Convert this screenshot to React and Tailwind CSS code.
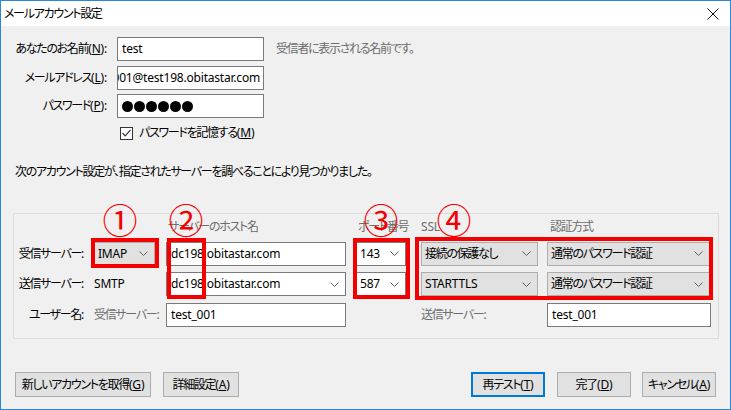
import React from 'react';

// Windows-style account setup dialog with red annotation boxes

const isLatin = (s) => /^[\x20-\x7e]+$/.test(s);

const Chevron = () => (
  <svg width="9" height="5" viewBox="0 0 9 5" className="shrink-0">
    <polyline points="0.5,0.5 4.5,4.5 8.5,0.5" fill="none" stroke="#606060" strokeWidth="1" />
  </svg>
);

// access key suffix like "(N):"
const Key = ({ k, colon }) => (
  <span className="tracking-[-0.2px]">
    (<span className="underline">{k}</span>){colon ? ':' : ''}
  </span>
);

function Label({ value }) {
  return <span className={`whitespace-nowrap ${isLatin(value) ? 'tracking-[-0.2px]' : ''}`}>{value}</span>;
}

function Combo({ value, gray, className }) {
  return (
    <div
      className={`flex h-[24px] items-center justify-between border pl-[3px] pr-[6px] ${
        gray ? 'border-[#adadad] bg-[#e1e1e1]' : 'border-[#7a7a7a] bg-white'
      } ${className}`}
    >
      <Label value={value} />
      <Chevron />
    </div>
  );
}

function TextBox({ value, className }) {
  return (
    <div className={`flex h-[24px] items-center border border-[#7a7a7a] bg-white pl-[4px] ${className}`}>
      <Label value={value} />
    </div>
  );
}

function Button({ children, primary, className }) {
  return (
    <div
      className={`flex h-[25px] items-center justify-center whitespace-nowrap bg-[#e1e1e1] ${
        primary ? 'border-2 border-[#0078d7]' : 'border border-[#adadad]'
      } ${className}`}
    >
      {children}
    </div>
  );
}

const Mark = ({ children, className }) => (
  <span
    className={`absolute flex h-[36px] w-[36px] items-center justify-center text-[35px] leading-none tracking-normal text-[#f40000] ${className}`}
  >
    {children}
  </span>
);

export default function App() {
  return (
    <div className="flex h-[410px] w-[731px] flex-col border border-[#2b88d8] bg-[#f0f0f0] font-['Noto_Sans','Noto_Sans_CJK_JP',sans-serif] text-[12px] tracking-[-1.3px] text-black [font-feature-settings:'palt']">
      {/* title bar */}
      <div className="flex h-[25px] shrink-0 items-center justify-between bg-white pl-[3px] pr-[11px]">
        <span>メールアカウント設定</span>
        <svg width="12" height="12" viewBox="0 0 12 12">
          <path d="M0.5 0.5 L11.5 11.5 M11.5 0.5 L0.5 11.5" stroke="#111" strokeWidth="1" />
        </svg>
      </div>

      {/* identity fields */}
      <div className="mt-[11px] flex flex-col gap-[4.5px]">
        <div className="flex items-center">
          <div className="w-[106px] whitespace-nowrap text-right">
            あなたのお名前<Key k="N" colon />
          </div>
          <TextBox value="test" className="ml-[10px] w-[147px]" />
          <span className="ml-[12px] text-[#6d6d6d]">受信者に表示される名前です。</span>
        </div>
        <div className="flex items-center">
          <div className="w-[106px] whitespace-nowrap text-right">
            メールアドレス<Key k="L" colon />
          </div>
          <div className="ml-[10px] flex h-[24px] w-[147px] items-center justify-end overflow-hidden border border-[#7a7a7a] bg-white pr-[3px]">
            <span className="whitespace-nowrap tracking-[-0.2px]">test_001@test198.obitastar.com</span>
          </div>
        </div>
        <div className="flex items-center">
          <div className="w-[106px] whitespace-nowrap text-right">
            パスワード<Key k="P" colon />
          </div>
          <div className="ml-[10px] flex h-[24px] w-[147px] items-center gap-[1px] border border-[#7a7a7a] bg-white pl-[4px]">
            {[0, 1, 2, 3, 4, 5].map((i) => (
              <span key={i} className="h-[11px] w-[11px] rounded-full bg-black" />
            ))}
          </div>
        </div>
      </div>

      <div className="ml-[119px] mt-[7px] flex h-[16px] items-center gap-[6px]">
        <div className="flex h-[13px] w-[13px] items-center justify-center border border-[#333] bg-white">
          <svg width="9" height="8" viewBox="0 0 9 8">
            <polyline points="0.5,4 3.2,6.8 8.5,0.8" fill="none" stroke="#333" strokeWidth="1.2" />
          </svg>
        </div>
        <span className="whitespace-nowrap">
          パスワードを記憶する<Key k="M" />
        </span>
      </div>

      <div className="ml-[14px] mt-[23px] h-[16px] whitespace-nowrap leading-[16px]">
        次のアカウント設定が、指定されたサーバーを調べることにより見つかりました。
      </div>

      {/* server settings group */}
      <div className="relative ml-[12px] mt-[33px] w-[706px] border border-[#dcdcdc] pb-[11px]">
        <div className="grid grid-cols-[80px_72px_190px_65px_126px_164px] grid-rows-[16px_24px_24px_24px] items-center gap-y-[6.5px] whitespace-nowrap pt-[5px]">
          <div />
          <div />
          <div className="pl-[2px] text-[#6d6d6d]">サーバーのホスト名</div>
          <div className="pl-[2px] text-[#6d6d6d]">ポート番号</div>
          <div className="tracking-[-0.2px] text-[#6d6d6d]">SSL</div>
          <div className="pl-[3px] text-[#6d6d6d]">認証方式</div>

          <div className="pr-[11px] text-right">受信サーバー:</div>
          <Combo value="IMAP" gray className="w-[61px]" />
          <TextBox value="dc198.obitastar.com" className="w-[180px]" />
          <Combo value="143" className="w-[50px]" />
          <Combo value="接続の保護なし" gray className="w-[117px]" />
          <Combo value="通常のパスワード認証" gray className="w-[163px]" />

          <div className="pr-[11px] text-right">送信サーバー:</div>
          <div className="tracking-[-0.2px]">SMTP</div>
          <Combo value="dc198.obitastar.com" className="w-[180px] pl-[4px]" />
          <Combo value="587" className="w-[50px]" />
          <Combo value="STARTTLS" gray className="w-[117px]" />
          <Combo value="通常のパスワード認証" gray className="w-[163px]" />

          <div className="pr-[11px] text-right">ユーザー名:</div>
          <div className="text-[#6d6d6d]">受信サーバー:</div>
          <TextBox value="test_001" className="w-[180px]" />
          <div />
          <div className="text-[#6d6d6d]">送信サーバー:</div>
          <TextBox value="test_001" className="w-[164px]" />
        </div>

        {/* annotations */}
        <div className="absolute left-[77px] top-[24px] h-[30px] w-[68px] border-4 border-[#f40000]" />
        <div className="absolute left-[153px] top-[24px] h-[61px] w-[39px] border-4 border-[#f40000]" />
        <div className="absolute left-[339px] top-[24px] h-[61px] w-[57px] border-4 border-[#f40000]" />
        <div className="absolute left-[401px] top-[23px] h-[63px] w-[298px] border-4 border-[#f40000]" />
        <Mark className="left-[88px] top-[-12px]">①</Mark>
        <Mark className="left-[154px] top-[-12px]">②</Mark>
        <Mark className="left-[349px] top-[-12px]">③</Mark>
        <Mark className="left-[422px] top-[-12px]">④</Mark>
      </div>

      {/* dialog buttons */}
      <div className="mb-[12px] mt-auto flex items-center px-[14px]">
        <Button className="w-[136px]">
          新しいアカウントを取得<Key k="G" />
        </Button>
        <Button className="ml-[12px] w-[76px]">
          詳細設定<Key k="A" />
        </Button>
        <div className="flex-1" />
        <Button primary className="w-[74px]">
          再テスト<Key k="T" />
        </Button>
        <Button className="ml-[12px] w-[74px]">
          完了<Key k="D" />
        </Button>
        <Button className="ml-[11px] w-[74px]">
          キャンセル<Key k="A" />
        </Button>
      </div>
    </div>
  );
}
